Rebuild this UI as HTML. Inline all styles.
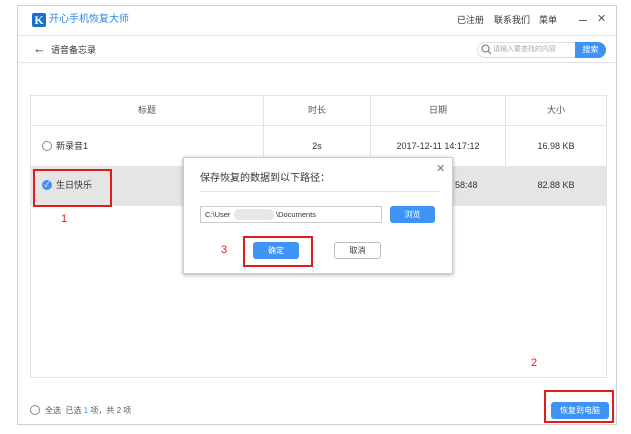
<!DOCTYPE html>
<html><head><meta charset="utf-8"><style>
*{margin:0;padding:0;box-sizing:border-box}
body{width:631px;height:434px;background:#fff;position:relative;overflow:hidden;font-family:"Liberation Sans","Noto Sans CJK SC",sans-serif;font-size:9px;color:#333}
.a{position:absolute}
.frame{left:17px;top:5px;width:600px;height:420px;border:1px solid #d0d0d0;background:#fff}
.hl{height:1px;background:#e3e3e3}
.tbl{left:30px;top:95px;width:577px;height:283px;border:1px solid #e3e3e3}
.vl{width:1px;background:#e3e3e3}
.c{text-align:center}
.btn{background:#3f93f4;color:#fff;border-radius:3px;text-align:center}
.red{border:2px solid #e21b1b}
.rn{color:#e21b1b;font-size:11px}
.radio{width:10px;height:10px;border:1px solid #888;border-radius:50%;background:#fff}
</style></head><body>
<div class="a frame"></div>
<div class="a" style="left:32px;top:13px;width:14px;height:14px;background:#1a6fd0;border-radius:2px;color:#fff;font:bold 12px/14px 'Liberation Serif',serif;text-align:center">K</div>
<div class="a" style="left:49px;top:13px;font-size:10px;line-height:14px;color:#2f86e6">开心手机恢复大师</div>
<div class="a" style="left:457px;top:14px;font-size:9px;line-height:12px">已注册</div>
<div class="a" style="left:494px;top:14px;font-size:9px;line-height:12px">联系我们</div>
<div class="a" style="left:539px;top:14px;font-size:9px;line-height:12px">菜单</div>
<div class="a" style="left:579px;top:20px;width:8px;height:1px;background:#666"></div>
<div class="a" style="left:597px;top:12px;font-size:11px;line-height:14px;color:#555">✕</div>
<div class="a hl" style="left:18px;top:35px;width:598px"></div>
<div class="a" style="left:33px;top:42px;font-size:13px;line-height:14px;color:#333">←</div>
<div class="a" style="left:51px;top:44px;line-height:12px">语音备忘录</div>
<div class="a" style="left:477px;top:42px;width:129px;height:16px;border:1px solid #ddd;border-radius:8px;background:#fff"></div>
<svg class="a" style="left:481px;top:44px" width="11" height="11"><circle cx="4.5" cy="4.5" r="3.5" fill="none" stroke="#777" stroke-width="1.1"/><line x1="7" y1="7" x2="10" y2="10" stroke="#777" stroke-width="1.1"/></svg>
<div class="a" style="left:493px;top:45px;font-size:7px;line-height:10px;color:#aaa">请输入要查找的内容</div>
<div class="a btn" style="left:575px;top:42px;width:31px;height:16px;border-radius:0 8px 8px 0;line-height:16px;font-size:8px">搜索</div>
<div class="a hl" style="left:18px;top:62px;width:598px"></div>
<div class="a tbl"></div>
<div class="a hl" style="left:31px;top:125px;width:575px"></div>
<div class="a hl" style="left:31px;top:166px;width:575px"></div>
<div class="a" style="left:31px;top:166px;width:575px;height:40px;background:#e5e5e5"></div>
<div class="a vl" style="left:263px;top:96px;height:70px"></div>
<div class="a vl" style="left:370px;top:96px;height:70px"></div>
<div class="a vl" style="left:505px;top:96px;height:70px"></div>
<div class="a c" style="left:31px;top:104px;width:232px;line-height:12px;color:#555">标题</div>
<div class="a c" style="left:264px;top:104px;width:106px;line-height:12px;color:#555">时长</div>
<div class="a c" style="left:371px;top:104px;width:134px;line-height:12px;color:#555">日期</div>
<div class="a c" style="left:506px;top:104px;width:100px;line-height:12px;color:#555">大小</div>
<div class="a radio" style="left:42px;top:141px"></div>
<div class="a" style="left:56px;top:140px;line-height:12px">新录音1</div>
<div class="a c" style="left:264px;top:140px;width:106px;line-height:12px">2s</div>
<div class="a c" style="left:371px;top:140px;width:134px;line-height:12px">2017-12-11 14:17:12</div>
<div class="a c" style="left:506px;top:140px;width:100px;line-height:12px">16.98 KB</div>
<div class="a" style="left:42px;top:180px;width:10px;height:10px;border-radius:50%;background:#3f8ff0;color:#fff;font-size:8px;line-height:10px;text-align:center">✓</div>
<div class="a" style="left:56px;top:179px;line-height:12px">生日快乐</div>
<div class="a" style="left:455px;top:179px;line-height:12px">58:48</div>
<div class="a c" style="left:506px;top:179px;width:100px;line-height:12px">82.88 KB</div>
<div class="a red" style="left:33px;top:169px;width:79px;height:38px"></div>
<div class="a rn" style="left:61px;top:213px">1</div>
<div class="a rn" style="left:531px;top:357px">2</div>
<div class="a" style="left:183px;top:157px;width:270px;height:117px;background:#fff;border:1px solid #ccc;box-shadow:0 1px 4px rgba(0,0,0,.3)"></div>
<div class="a" style="left:436px;top:163px;font-size:11px;color:#777;line-height:12px">✕</div>
<div class="a" style="left:200px;top:172px;font-size:10px;line-height:14px">保存恢复的数据到以下路径：</div>
<div class="a hl" style="left:200px;top:191px;width:240px"></div>
<div class="a" style="left:200px;top:206px;width:182px;height:17px;border:1px solid #ccc;background:#fff"></div>
<div class="a" style="left:205px;top:209px;font-size:7.5px;line-height:11px">C:\User</div>
<div class="a" style="left:234px;top:209px;width:40px;height:11px;border-radius:5px;background:#e8e8e8"></div>
<div class="a" style="left:276px;top:209px;font-size:7.5px;line-height:11px">\Documents</div>
<div class="a btn" style="left:390px;top:206px;width:45px;height:17px;line-height:17px;font-size:8px">浏览</div>
<div class="a btn" style="left:253px;top:242px;width:46px;height:17px;line-height:17px;font-size:8px">确定</div>
<div class="a" style="left:334px;top:242px;width:47px;height:17px;border:1px solid #bbb;border-radius:3px;text-align:center;line-height:15px;font-size:8px">取消</div>
<div class="a red" style="left:243px;top:236px;width:70px;height:31px"></div>
<div class="a rn" style="left:221px;top:244px">3</div>
<div class="a radio" style="left:30px;top:405px"></div>
<div class="a" style="left:45px;top:405px;line-height:11px;font-size:8px;color:#555">全选 &nbsp;已选 <span style="color:#3f8ff0">1</span> 项，共 2 项</div>
<div class="a btn" style="left:551px;top:402px;width:58px;height:17px;line-height:17px;font-size:8px">恢复到电脑</div>
<div class="a red" style="left:544px;top:390px;width:70px;height:33px"></div>
</body></html>
